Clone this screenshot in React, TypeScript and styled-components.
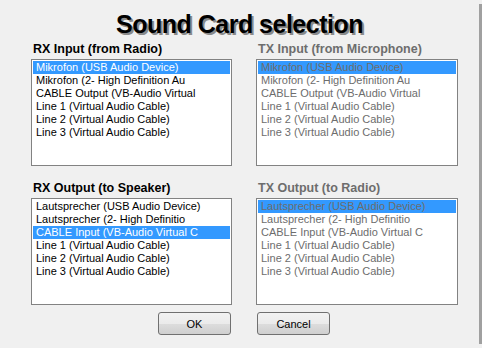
import * as React from "react"
import styled, { createGlobalStyle } from "styled-components"

const GlobalStyle = createGlobalStyle`
  html, body {
    margin: 0;
    padding: 0;
    background: #f0f0f0;
  }
`

const Dialog = styled.div`
  width: 479px;
  height: 344px;
  box-sizing: border-box;
  background: #f0f0f0;
  box-shadow: 3px 4px 0 #a0a0a0;
  font-family: "Liberation Sans", Arial, sans-serif;
  display: flex;
  flex-direction: column;
  padding: 9px 21px 0 31px;
`

const Title = styled.h1`
  margin: 0 0 2px -10px;
  text-align: center;
  font-size: 25px;
  line-height: 30px;
  font-weight: bold;
  letter-spacing: -0.5px;
  color: #000;
  text-shadow: 2px 2px 0 #8a8a8a;
`

const Grid = styled.div`
  display: grid;
  grid-template-columns: 201px 202px;
  column-gap: 24px;
`

const Section = styled.div<{ $top?: number }>`
  display: flex;
  flex-direction: column;
  margin-top: ${(p) => p.$top ?? 0}px;
`

const Label = styled.div<{ $disabled?: boolean }>`
  font-size: 12.5px;
  font-weight: bold;
  line-height: 16px;
  padding-left: 2px;
  margin-bottom: 2px;
  color: ${(p) => (p.$disabled ? "#6d6d6d" : "#000")};
`

const ListBox = styled.div`
  height: 107px;
  box-sizing: border-box;
  border: 1px solid #828282;
  background: #fff;
  padding: 1px;
`

const Item = styled.div<{ $selected?: boolean; $disabled?: boolean }>`
  height: 13px;
  line-height: 13px;
  font-size: 11px;
  padding-left: 3px;
  white-space: nowrap;
  overflow: hidden;
  background: ${(p) => (p.$selected ? "#3399ff" : "transparent")};
  color: ${(p) =>
    p.$disabled ? "#6d6d6d" : p.$selected ? "#fff" : "#000"};
`

const Buttons = styled.div`
  display: grid;
  grid-template-columns: 201px 202px;
  column-gap: 24px;
  margin-top: 7px;
`

const Button = styled.button<{ $align: "start" | "end" }>`
  justify-self: ${(p) => p.$align};
  width: 73px;
  height: 23px;
  margin: ${(p) => (p.$align === "end" ? "0 1px 0 0" : "0 0 0 1px")};
  border: 1px solid #707070;
  border-radius: 3px;
  background: linear-gradient(to bottom, #f2f2f2 0%, #ebebeb 50%, #dddddd 51%, #cfcfcf 100%);
  font-family: "Liberation Sans", Arial, sans-serif;
  font-size: 11px;
  color: #000;
  padding: 0;
`

const inputs = [
  "Mikrofon (USB Audio Device)",
  "Mikrofon (2- High Definition Au",
  "CABLE Output (VB-Audio Virtual",
  "Line 1 (Virtual Audio Cable)",
  "Line 2 (Virtual Audio Cable)",
  "Line 3 (Virtual Audio Cable)",
]

const outputs = [
  "Lautsprecher (USB Audio Device)",
  "Lautsprecher (2- High Definitio",
  "CABLE Input (VB-Audio Virtual C",
  "Line 1 (Virtual Audio Cable)",
  "Line 2 (Virtual Audio Cable)",
  "Line 3 (Virtual Audio Cable)",
]

const DeviceList = ({
  label,
  items,
  selected,
  disabled,
  top,
}: {
  label: string
  items: string[]
  selected: number
  disabled?: boolean
  top?: number
}) => (
  <Section $top={top}>
    <Label $disabled={disabled}>{label}</Label>
    <ListBox>
      {items.map((name, i) => (
        <Item key={name} $selected={i === selected} $disabled={disabled}>
          {name}
        </Item>
      ))}
    </ListBox>
  </Section>
)

export default function App() {
  return (
    <>
      <GlobalStyle />
      <Dialog>
        <Title>Sound Card selection</Title>
        <Grid>
          <DeviceList label="RX Input (from Radio)" items={inputs} selected={0} />
          <DeviceList
            label="TX Input (from Microphone)"
            items={inputs}
            selected={0}
            disabled
          />
          <DeviceList
            label="RX Output (to Speaker)"
            items={outputs}
            selected={2}
            top={14}
          />
          <DeviceList
            label="TX Output (to Radio)"
            items={outputs}
            selected={0}
            disabled
            top={14}
          />
        </Grid>
        <Buttons>
          <Button $align="end">OK</Button>
          <Button $align="start">Cancel</Button>
        </Buttons>
      </Dialog>
    </>
  )
}
